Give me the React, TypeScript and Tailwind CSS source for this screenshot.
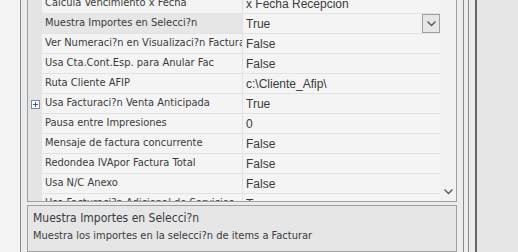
import React from "react";

const rows: { label: string; value: string; expand?: boolean }[] = [
  { label: "Calcula Vencimiento x Fecha", value: "x Fecha Recepcion" },
  { label: "Muestra Importes en Selecci?n", value: "True" },
  { label: "Ver Numeraci?n en Visualizaci?n Facturas", value: "False" },
  { label: "Usa Cta.Cont.Esp. para Anular Fac", value: "False" },
  { label: "Ruta Cliente AFIP", value: "c:\\Cliente_Afip\\" },
  { label: "Usa Facturaci?n Venta Anticipada", value: "True", expand: true },
  { label: "Pausa entre Impresiones", value: "0" },
  { label: "Mensaje de factura concurrente", value: "False" },
  { label: "Redondea IVApor Factura Total", value: "False" },
  { label: "Usa N/C Anexo", value: "False" },
  { label: "Usa Facturaci?n Adicional de Servicios", value: "True" },
];

const labelFont = { fontFamily: '"DejaVu Sans Condensed", "DejaVu Sans", sans-serif' };

function Chevron() {
  return (
    <svg width="9" height="6" viewBox="0 0 9 6">
      <path d="M0.5 0.5 L4.5 4.5 L8.5 0.5" fill="none" stroke="currentColor" strokeWidth="1.3" />
    </svg>
  );
}

export default function App() {
  return (
    <div className="flex w-[518px] h-[252px] overflow-hidden bg-[#ececec] text-[#3a3a3a]">
      {/* left gutter */}
      <div className="w-[20px] shrink-0 bg-[#f3f3f3]" />
      <div className="w-px shrink-0 bg-[#7d8d94]" />
      <div className="w-[6px] shrink-0" />

      {/* property grid + description */}
      <div className="w-[430px] shrink-0 flex flex-col">
        <div className="h-[202px] shrink-0 flex border-x border-b border-[#a0a0a0] overflow-hidden">
          <div className="w-[14px] shrink-0 bg-[#e4e4e4] flex flex-col -mt-[6px]">
            {rows.map((r, i) => (
              <div key={i} className="h-[20px] shrink-0 flex items-center justify-center">
                {r.expand && (
                  <div className="w-[9px] h-[9px] border border-[#7a8aa6] bg-white flex items-center justify-center">
                    <svg width="5" height="5" viewBox="0 0 5 5">
                      <path d="M0 2.5 H5 M2.5 0 V5" stroke="#3a5a9a" strokeWidth="1" />
                    </svg>
                  </div>
                )}
              </div>
            ))}
          </div>
          <div className="w-[414px] flex flex-col -mt-[6px] bg-[#f4f4f4]">
            {rows.map((r, i) => {
              const sel = i === 1;
              return (
                <div key={i} className="h-[20px] shrink-0 flex border-b border-[#e2e2e2]">
                  <div
                    className={`w-[201px] shrink-0 border-r border-[#e2e2e2] pl-[3px] flex items-center whitespace-nowrap overflow-hidden text-[11px] ${sel ? "bg-[#e6e6e6]" : ""}`}
                    style={labelFont}
                  >
                    <span className="block overflow-hidden">{r.label}</span>
                  </div>
                  <div className="flex-1 min-w-0 flex items-center pl-[3px] text-[12px] font-['Liberation_Sans',sans-serif] whitespace-nowrap overflow-hidden">
                    <span className="flex-1">{r.value}</span>
                    {sel && (
                      <div className="w-[18px] h-[19px] border border-[#a0a0a0] bg-[#e6e6e6] flex items-center justify-center text-[#555]">
                        <Chevron />
                      </div>
                    )}
                  </div>
                </div>
              );
            })}
          </div>
          <div className="w-[16px] shrink-0 bg-[#f2f2f2] flex flex-col justify-end items-center pb-[6px] text-[#555]">
            <Chevron />
          </div>
        </div>
        <div className="h-[3px] shrink-0" />
        <div className="flex-1 border border-[#a0a0a0] bg-[#e6e6e6] px-[5px] pt-[2px] text-[#3a3a44]" style={labelFont}>
          <div className="h-[19px] flex items-center text-[12px]">Muestra Importes en Selecci?n</div>
          <div className="h-[18px] flex items-center text-[11px]">Muestra los importes en la selecci?n de items a Facturar</div>
        </div>
      </div>

      {/* right splitters */}
      <div className="w-[6px] shrink-0" />
      <div className="w-px shrink-0 bg-[#7d8d94]" />
      <div className="w-[4px] shrink-0" />
      <div className="w-px shrink-0 bg-[#7d8d94]" />
      <div className="w-[6px] shrink-0" />
      <div className="w-[2px] shrink-0 bg-[#666]" />
      <div className="flex-1 bg-[#e6e6e6]" />
    </div>
  );
}
